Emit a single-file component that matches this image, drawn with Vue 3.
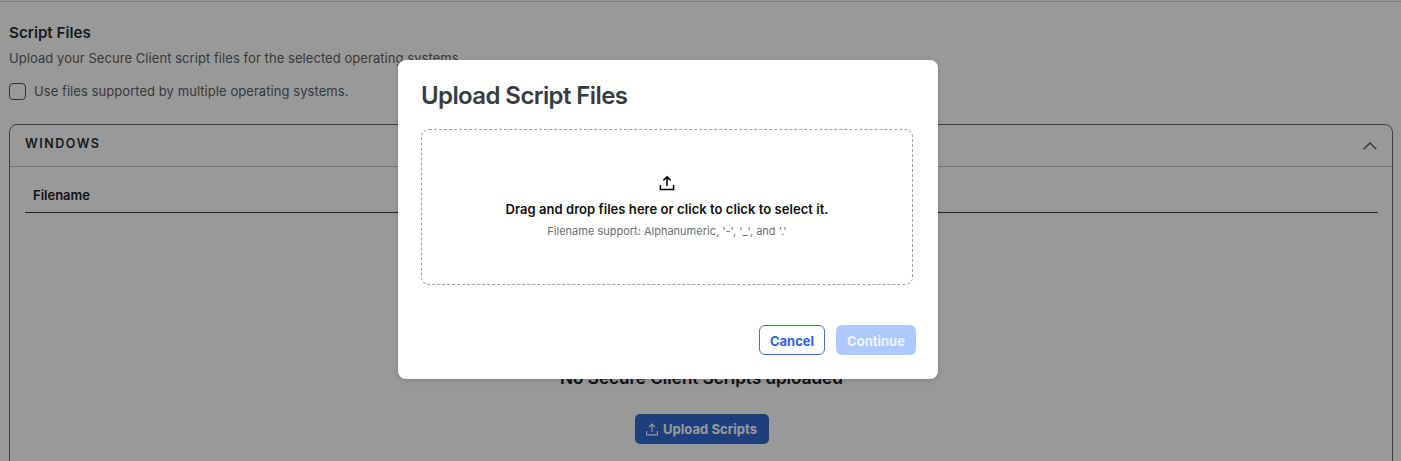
<template>
  <div class="page">
    <div class="content">
      <h2 class="section-title">Script Files</h2>
      <p class="section-desc">Upload your Secure Client script files for the selected operating systems.</p>
      <label class="check-row">
        <span class="checkbox"></span>
        <span>Use files supported by multiple operating systems.</span>
      </label>

      <section class="panel">
        <header class="panel-head">
          <span class="panel-title">WINDOWS</span>
          <svg class="chevron" width="14" height="8" viewBox="0 0 14 8" fill="none">
            <path d="M0.7 7.2 L7 1 L13.3 7.2" stroke="#55565c" stroke-width="1.3" />
          </svg>
        </header>
        <div class="panel-body">
          <div class="table-head">Filename</div>
          <div class="empty">
            <div class="empty-title">No Secure Client Scripts uploaded</div>
            <button class="upload-btn">
              <svg width="12" height="13" viewBox="0 0 12 13" fill="none" stroke="currentColor" stroke-width="1.1">
                <path d="M6 9 V1.2 M3 4.1 L6 1 L9 4.1 M0.6 8 V11.9 H11.4 V8" />
              </svg>
              Upload Scripts
            </button>
          </div>
        </div>
      </section>
    </div>

    <div class="backdrop">
      <div class="modal">
        <h1 class="modal-title">Upload Script Files</h1>
        <div class="dropzone">
          <svg class="drop-icon" width="16" height="16" viewBox="0 0 16 16" fill="none" stroke="#000" stroke-width="1.5">
            <path d="M8 11 V2 M4.4 5.4 L8 1.8 L11.6 5.4 M1.4 10 V14.4 H14.6 V10" />
          </svg>
          <div class="drop-main">Drag and drop files here or click to click to select it.</div>
          <div class="drop-hint">Filename support: Alphanumeric, '-', '_', and '.'</div>
        </div>
        <div class="modal-actions">
          <button class="btn-cancel">Cancel</button>
          <button class="btn-continue" disabled>Continue</button>
        </div>
      </div>
    </div>
  </div>
</template>

<script setup>
</script>

<style>
body {
  margin: 0;
  overflow: hidden;
}
</style>

<style scoped>
.page {
  position: relative;
  height: 461px;
  overflow: hidden;
  background: #fff;
  font-family: Inter, "Noto Sans", sans-serif;
  color: #373c42;
}

.content {
  border-top: 1px solid #d8d8dc;
  margin-top: 1px;
  padding: 21px 8px 0 9px;
}

.section-title {
  margin: 0;
  font: 600 15.2px/20px Inter, sans-serif;
  color: #2b2f34;
}

.section-desc {
  margin: 5px 0 0;
  font-size: 13px;
  line-height: 20px;
  letter-spacing: 0.06px;
  color: #5c6066;
}

.check-row {
  display: flex;
  align-items: center;
  gap: 8px;
  margin-top: 13px;
  font-size: 13px;
  line-height: 20px;
  letter-spacing: 0.06px;
  color: #5c6066;
}

.checkbox {
  width: 15px;
  height: 15px;
  border: 1px solid #55565c;
  border-radius: 4px;
  background: #fff;
}

.panel {
  margin-top: 23px;
  border: 1px solid #6a6b71;
  border-radius: 8px;
  height: 420px;
}

.panel-head {
  display: flex;
  align-items: center;
  justify-content: space-between;
  height: 41px;
  padding: 0 15px;
  border-bottom: 1px solid #c4c4c8;
}

.panel-title {
  padding-bottom: 4px;
  font: 600 12.5px/16px Inter, sans-serif;
  letter-spacing: 1.5px;
  color: #2b2f34;
}

.panel-body {
  padding: 0 14px 0 15px;
}

.table-head {
  padding: 19px 8px 7px;
  height: 46px;
  box-sizing: border-box;
  border-bottom: 1px solid #373c42;
  font: 600 13px/19px Inter, sans-serif;
  color: #1d2025;
}

.empty {
  display: flex;
  flex-direction: column;
  align-items: center;
  padding-top: 155px;
}

.empty-title {
  font: 600 17.1px/20px Inter, sans-serif;
  color: #1d2025;
}

.upload-btn {
  display: flex;
  align-items: center;
  justify-content: center;
  gap: 5px;
  width: 134px;
  margin-top: 26px;
  height: 30px;
  padding: 0;
  border: 0;
  border-radius: 5px;
  background: #3369d1;
  color: #fff;
  font: 700 13px Inter, sans-serif;
  letter-spacing: 0.05px;
}

.backdrop {
  position: absolute;
  inset: 0;
  background: rgba(0, 0, 0, 0.4);
}

.modal {
  position: absolute;
  left: 398px;
  top: 60px;
  width: 540px;
  height: 319px;
  box-sizing: border-box;
  padding: 20px 22px 24px 23px;
  border-radius: 8px;
  background: #fff;
  box-shadow: 0 2px 6px rgba(0, 0, 0, 0.15);
}

.modal-title {
  margin: 0;
  font: 600 24px/32px Inter, sans-serif;
  letter-spacing: -0.6px;
  color: #373c42;
}

.dropzone {
  display: flex;
  flex-direction: column;
  align-items: center;
  box-sizing: border-box;
  width: 492px;
  height: 156px;
  margin-top: 17px;
  padding-top: 45px;
  border: 1px dashed #a0a1a7;
  border-radius: 8px;
}

.drop-icon {
  display: block;
}

.drop-main {
  margin-top: 8px;
  font: 600 13px/20px Inter, sans-serif;
  letter-spacing: 0.05px;
  color: #0d0f12;
}

.drop-hint {
  margin-top: 3px;
  font-size: 11px;
  line-height: 18px;
  color: #6b6f76;
}

.modal-actions {
  display: flex;
  justify-content: flex-end;
  gap: 11px;
  margin-top: 40px;
}

.btn-cancel,
.btn-continue {
  height: 30px;
  padding: 1px 0 0;
  border-radius: 6px;
  box-sizing: border-box;
  font: 700 13px Inter, sans-serif;
}

.btn-cancel {
  width: 66px;
  border: 1px solid #3a70d6;
  background: #fff;
  color: #2f66d0;
}

.btn-continue {
  width: 80px;
  border: 0;
  background: #adcaff;
  color: #eef4ff;
}
</style>
